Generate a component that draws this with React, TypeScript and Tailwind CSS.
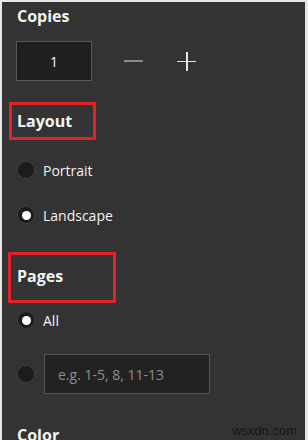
const font = { fontFamily: '"Open Sans", "Noto Sans", sans-serif' }

function Radio({ checked }: { checked?: boolean }) {
  return (
    <span className="flex h-[18px] w-[18px] shrink-0 items-center justify-center rounded-full border border-[#3e3e3e] bg-[#1c1c1c]">
      {checked && <span className="h-[9px] w-[9px] rounded-full bg-white" />}
    </span>
  )
}

export default function App() {
  return (
    <div className="h-[440px] w-[308px] overflow-hidden bg-[#e6e6e6] pl-[2px] pr-[3px] pt-[2px]" style={font}>
      <div className="relative flex h-full flex-col overflow-hidden bg-[#333333] text-[#f2f2f2] *:shrink-0">
        <h2 className="mt-[3px] ml-[15px] h-[22px] text-[16px] font-bold leading-[22px]">Copies</h2>

        <div className="mt-[14px] flex h-[40px] items-center">
          <div className="ml-[14px] flex h-[40px] w-[76px] items-center justify-center border border-[#575757] bg-[#1f1f1f] text-[14px]">
            1
          </div>
          <span className="ml-[32px] h-[1.5px] w-[19px] bg-[#8a8a8a]" />
          <span className="relative ml-[34px] h-[19px] w-[19px]">
            <span className="absolute left-0 top-[9px] h-[1.5px] w-[19px] bg-[#e4e4e4]" />
            <span className="absolute left-[9px] top-0 h-[19px] w-[1.5px] bg-[#e4e4e4]" />
          </span>
        </div>

        <div className="mt-[21px] ml-[7px] flex h-[38px] w-[87px] items-center border-[3px] border-[#e3212b] pl-[5px]">
          <span className="text-[16px] font-bold leading-[22px]">Layout</span>
        </div>

        <label className="mt-[21px] ml-[15px] flex h-[18px] items-center gap-[8px] text-[14px]">
          <Radio />
          Portrait
        </label>
        <label className="mt-[27px] ml-[15px] flex h-[18px] items-center gap-[8px] text-[14px]">
          <Radio checked />
          Landscape
        </label>

        <div className="mt-[28px] ml-[6px] h-[51px] w-[108px] border-[3px] border-[#e3212b] pl-[6px] pt-[9px]">
          <span className="text-[16px] font-bold leading-[22px]">Pages</span>
        </div>

        <label className="mt-[8px] ml-[15px] flex h-[18px] items-center gap-[8px] text-[14px]">
          <Radio checked />
          All
        </label>

        <div className="mt-[25px] ml-[15px] flex h-[40px] items-center gap-[9px]">
          <Radio />
          <div className="flex h-[40px] w-[166px] items-center border border-[#555555] bg-[#222222] pl-[13px] text-[14px] text-[#8e8e8e]">
            e.g. 1-5, 8, 11-13
          </div>
        </div>

        <h2 className="mt-[30px] ml-[15px] h-[22px] text-[16px] font-bold leading-[22px]">Color</h2>

        <span
          className="absolute bottom-0 right-[8px] text-[13px] text-[#161616]"
          style={{ fontFamily: '"Liberation Sans", Arial, sans-serif' }}
        >
          wsxdn.com
        </span>
      </div>
    </div>
  )
}
